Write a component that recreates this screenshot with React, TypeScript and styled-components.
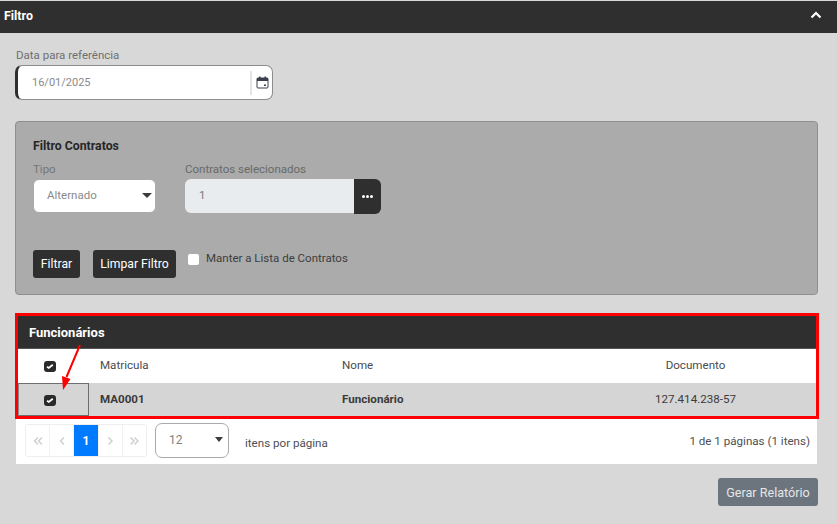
import React from "react";
import styled, { createGlobalStyle } from "styled-components";

const Global = createGlobalStyle`
  html, body { margin: 0; padding: 0; background: #d8d8d8; }
  body { font-family: Roboto, "Liberation Sans", sans-serif; width: 837px; height: 524px; overflow: hidden; }
  * { box-sizing: border-box; }
`;

const Page = styled.div`
  position: relative;
  width: 837px;
  height: 524px;
  padding-top: 1px;
  background: #d8d8d8;
`;
const TopBar = styled.div`
  height: 32px;
  background: #2f2f2f;
  color: #fff;
  display: flex;
  align-items: center;
  justify-content: space-between;
  padding: 0 15px 4px 4px;
  font-size: 12.4px;
  font-weight: 700;
`;
const Content = styled.div`
  padding: 15px 19px 0 15px;
`;
const FieldLabel = styled.div<{ $tone?: string; $indent?: number }>`
  font-size: 11.5px;
  line-height: 14px;
  margin-left: ${(p) => p.$indent || 0}px;
  color: ${(p) => p.$tone || "#6f6f6f"};
`;
const DateField = styled.div`
  width: 258px;
  height: 35px;
  margin: 3px 0 0;
  background: #fff;
  border: 1px solid #8d8d8d;
  border-left: 3px solid #2f2f2f;
  border-radius: 7px;
  display: flex;
  align-items: center;
  justify-content: space-between;
  padding-left: 14px;
  font-size: 11px;
  color: #8a8a8a;
`;
const CalendarSlot = styled.div`
  width: 22px;
  height: 24px;
  border-left: 2px solid #e4e4e4;
  display: flex;
  align-items: center;
  justify-content: center;
`;
const FilterPanel = styled.section`
  width: 803px;
  height: 174px;
  margin-top: 21px;
  background: #ababab;
  border: 1px solid #8f8f8f;
  border-radius: 4px;
  padding: 17px 17px 0;
`;
const PanelTitle = styled.div`
  font-size: 12.3px;
  line-height: 14px;
  font-weight: 700;
  color: #262626;
`;
const FieldRow = styled.div`
  display: flex;
  gap: 29px;
  margin-top: 9px;
`;
const Field = styled.div`
  display: flex;
  flex-direction: column;
`;
const SelectBox = styled.div<{ $w: number; $radius: number }>`
  width: ${(p) => p.$w}px;
  height: 34px;
  margin-top: 3px;
  background: #fff;
  border: 1px solid #ababab;
  border-radius: ${(p) => p.$radius}px;
  display: flex;
  align-items: center;
  justify-content: space-between;
  padding: 0 3px 2px 13px;
  font-size: 11.5px;
  color: #8a8a8a;
`;
const Caret = styled.span<{ $half: number; $right: number }>`
  width: 0;
  height: 0;
  margin-right: ${(p) => p.$right}px;
  border-left: ${(p) => p.$half}px solid transparent;
  border-right: ${(p) => p.$half}px solid transparent;
  border-top: 5px solid #3c3c3c;
`;
const ContractsGroup = styled.div`
  display: flex;
  height: 35px;
  margin-top: 3px;
`;
const ContractsInput = styled.div`
  width: 169px;
  height: 34px;
  background: #e9ecef;
  border-radius: 6px 0 0 6px;
  display: flex;
  align-items: center;
  padding: 0 0 2px 14px;
  font-size: 11.5px;
  color: #77797c;
`;
const DotsButton = styled.div`
  width: 27px;
  height: 35px;
  background: #2f2f2f;
  border-radius: 0 6px 6px 0;
  display: flex;
  align-items: center;
  justify-content: center;
  gap: 1px;
`;
const Dot = styled.span`
  width: 3px;
  height: 3px;
  border-radius: 50%;
  background: #fff;
`;
const ActionRow = styled.div`
  display: flex;
  align-items: flex-start;
  margin-top: 36px;
`;
const DarkButton = styled.div<{ $w: number; $mr: number }>`
  width: ${(p) => p.$w}px;
  height: 28px;
  margin-right: ${(p) => p.$mr}px;
  background: #2f2f2f;
  color: #fff;
  border-radius: 3px;
  display: flex;
  align-items: center;
  justify-content: center;
  font-size: 12.2px;
`;
const KeepLabel = styled.label`
  display: flex;
  align-items: center;
  gap: 7px;
  font-size: 11.5px;
  line-height: 14px;
  height: 14px;
  margin-top: 1px;
  color: #3d3d3d;
`;
const FakeCheck = styled.span`
  width: 11px;
  height: 11px;
  margin-top: 2px;
  background: #fff;
  border-radius: 2px;
`;
const EmployeesPanel = styled.section`
  width: 804px;
  height: 106px;
  margin-top: 18px;
  border: 3px solid #ff0000;
  background: #fff;
`;
const EmployeesTitle = styled.div`
  height: 33px;
  background: #2f2f2f;
  color: #fff;
  font-size: 13px;
  font-weight: 700;
  display: flex;
  align-items: center;
  padding: 0 0 0 11px;
  border-bottom: 1px solid #555;
`;
const TableRow = styled.div<{ $selected?: boolean }>`
  display: grid;
  grid-template-columns: 71px 243px 240px 1fr;
  height: ${(p) => (p.$selected ? 33 : 34)}px;
  align-items: center;
  font-size: 11.6px;
  color: ${(p) => (p.$selected ? "#3b3b3b" : "#484b50")};
  background: ${(p) => (p.$selected ? "#d5d5d5" : "#fff")};
`;
const CheckCell = styled.div<{ $selected?: boolean }>`
  height: 100%;
  display: flex;
  align-items: center;
  justify-content: center;
  padding: ${(p) => (p.$selected ? "2px" : "1px")} 7px 0 0;
  border: ${(p) => (p.$selected ? "1px solid #6e6e6e" : "none")};
  border-left: ${(p) => (p.$selected ? "1px solid #8a8a8a" : "none")};
`;
const TextCell = styled.div<{ $strong?: boolean }>`
  padding: 0 0 2px 10px;
  font-weight: ${(p) => (p.$strong ? 700 : 400)};
`;
const IdCell = styled(TextCell)`
  padding-left: 11px;
`;
const DocCell = styled.div`
  text-align: center;
  padding: 0 1px 2px 4px;
`;
const Footer = styled.div`
  width: 801px;
  height: 45px;
  margin-left: 1px;
  background: #fff;
  display: flex;
  align-items: center;
  padding: 0 7px 0 9px;
  font-size: 11.6px;
  color: #4c4f53;
`;
const Pager = styled.div`
  display: flex;
  width: 122px;
  height: 33px;
  margin-top: -2px;
  border: 1px solid #eeeeee;
  border-radius: 3px;
  overflow: hidden;
`;
const PageCell = styled.div<{ $active?: boolean }>`
  flex: 1;
  display: flex;
  align-items: center;
  justify-content: center;
  border-right: 1px solid #f1f1f1;
  background: ${(p) => (p.$active ? "#007bff" : "#fff")};
  color: ${(p) => (p.$active ? "#fff" : "#c9c9c9")};
  font-weight: ${(p) => (p.$active ? 700 : 400)};
  font-size: 12px;
  &:last-child { border-right: none; }
`;
const PageSize = styled(SelectBox)`
  margin: -2px 0 0 8px;
  height: 35px;
  padding-bottom: 2px;
  border: 1px solid #aaaaaa;
  font-size: 12px;
  color: #7f7f7f;
`;
const PerPage = styled.span`
  margin: 2px 0 0 16px;
`;
const PageSummary = styled.span`
  margin-left: auto;
  margin-top: -2px;
`;
const ReportRow = styled.div`
  display: flex;
  justify-content: flex-end;
  width: 803px;
  margin-top: 14px;
`;
const ReportButton = styled.div`
  width: 100px;
  height: 28px;
  border-radius: 3px;
  background: #6c757d;
  color: #e4e6e8;
  font-size: 12.6px;
  display: flex;
  align-items: center;
  justify-content: center;
`;
const ArrowOverlay = styled.svg`
  position: absolute;
  left: 60px;
  top: 343px;
`;

const Chevron = () => (
  <svg width="12" height="8" viewBox="0 0 12 8">
    <path d="M1.5 6.5 6 2l4.5 4.5" fill="none" stroke="#fff" strokeWidth="2.2" />
  </svg>
);

const CalendarIcon = () => (
  <svg width="13" height="13" viewBox="0 0 13 13">
    <rect x="1" y="2" width="11" height="10" rx="1" fill="#fff" stroke="#3a3f4a" strokeWidth="1" />
    <rect x="1" y="2" width="11" height="3" fill="#3a3f4a" />
    <rect x="3" y="0.5" width="1.5" height="2.5" fill="#3a3f4a" />
    <rect x="8.5" y="0.5" width="1.5" height="2.5" fill="#3a3f4a" />
    <rect x="8" y="8.5" width="2" height="1.5" fill="#3a3f4a" />
  </svg>
);

const CheckIcon = () => (
  <svg width="12" height="11" viewBox="0 0 12 11">
    <rect x="0" y="0" width="12" height="11" rx="3" fill="#2a2a2a" />
    <path d="M3 5.8 4.8 7 8.8 3.8" fill="none" stroke="#fff" strokeWidth="1.8" />
  </svg>
);

const Chev = ({ dir, double }: { dir: "l" | "r"; double?: boolean }) => {
  const d = dir === "l" ? "M5 1.5 1.5 5 5 8.5" : "M1.5 1.5 5 5 1.5 8.5";
  return (
    <svg width={double ? 10 : 6} height="10" viewBox={double ? "0 0 10 10" : "0 0 6 10"}>
      <path d={d} fill="none" stroke="#cfcfcf" strokeWidth="1.5" />
      {double && <path d={d} transform="translate(4 0)" fill="none" stroke="#cfcfcf" strokeWidth="1.5" />}
    </svg>
  );
};

export default function App() {
  return (
    <Page>
      <Global />
      <TopBar>
        <span>Filtro</span>
        <Chevron />
      </TopBar>
      <Content>
        <FieldLabel $indent={1}>Data para referência</FieldLabel>
        <DateField>
          <span>16/01/2025</span>
          <CalendarSlot>
            <CalendarIcon />
          </CalendarSlot>
        </DateField>

        <FilterPanel>
          <PanelTitle>Filtro Contratos</PanelTitle>
          <FieldRow>
            <Field>
              <FieldLabel $tone="#767676">Tipo</FieldLabel>
              <SelectBox $w={123} $radius={6}>
                <span>Alternado</span>
                <Caret $half={5} $right={0} />
              </SelectBox>
            </Field>
            <Field>
              <FieldLabel $tone="#696969">Contratos selecionados</FieldLabel>
              <ContractsGroup>
                <ContractsInput>1</ContractsInput>
                <DotsButton>
                  <Dot />
                  <Dot />
                  <Dot />
                </DotsButton>
              </ContractsGroup>
            </Field>
          </FieldRow>
          <ActionRow>
            <DarkButton $w={47} $mr={13}>Filtrar</DarkButton>
            <DarkButton $w={83} $mr={12}>Limpar Filtro</DarkButton>
            <KeepLabel>
              <FakeCheck />
              Manter a Lista de Contratos
            </KeepLabel>
          </ActionRow>
        </FilterPanel>

        <EmployeesPanel>
          <EmployeesTitle>Funcionários</EmployeesTitle>
          <TableRow>
            <CheckCell><CheckIcon /></CheckCell>
            <IdCell>Matricula</IdCell>
            <TextCell>Nome</TextCell>
            <DocCell>Documento</DocCell>
          </TableRow>
          <TableRow $selected>
            <CheckCell $selected><CheckIcon /></CheckCell>
            <IdCell $strong>MA0001</IdCell>
            <TextCell $strong>Funcionário</TextCell>
            <DocCell>127.414.238-57</DocCell>
          </TableRow>
        </EmployeesPanel>

        <Footer>
          <Pager>
            <PageCell><Chev dir="l" double /></PageCell>
            <PageCell><Chev dir="l" /></PageCell>
            <PageCell $active>1</PageCell>
            <PageCell><Chev dir="r" /></PageCell>
            <PageCell><Chev dir="r" double /></PageCell>
          </Pager>
          <PageSize $w={74} $radius={7}>
            <span>12</span>
            <Caret $half={4} $right={2} />
          </PageSize>
          <PerPage>itens por página</PerPage>
          <PageSummary>1 de 1 páginas (1 itens)</PageSummary>
        </Footer>

        <ReportRow>
          <ReportButton>Gerar Relatório</ReportButton>
        </ReportRow>
      </Content>
      <ArrowOverlay width="22" height="50" viewBox="0 0 22 50">
        <path d="M20 2 6.5 34" stroke="#ff0000" strokeWidth="2" fill="none" />
        <path d="M3 47 2 33 10.5 36Z" fill="#ff0000" />
      </ArrowOverlay>
    </Page>
  );
}
